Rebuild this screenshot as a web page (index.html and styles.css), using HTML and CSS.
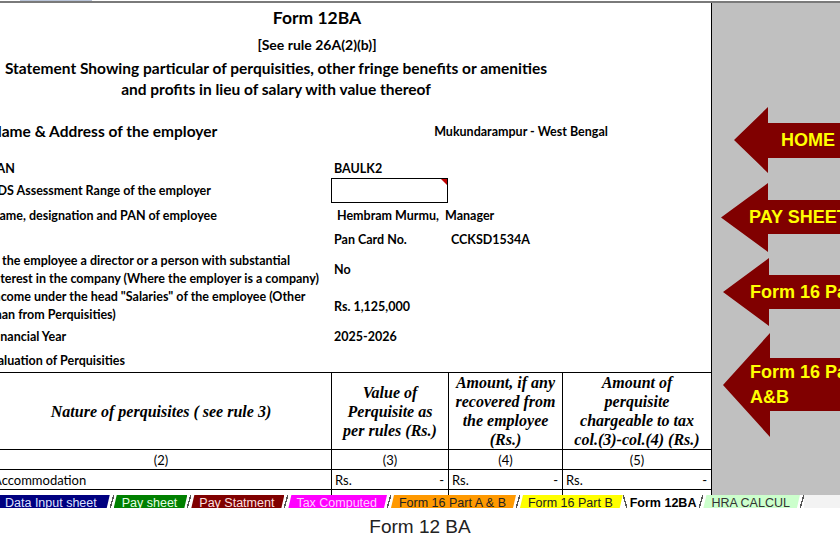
FILE: index.html
```html
<html>
<head>
  <link rel="stylesheet" href="styles.css">
</head>
<body>

<div class="topline"><span class="topline-tab"></span></div>

<div class="workspace">
  <div class="sheet">
    <div class="sheet-inner">

      <div class="row r-title"><div class="span3 shift">Form 12BA</div></div>
      <div class="row r-rule"><div class="span3 shift">[See rule 26A(2)(b)]</div></div>
      <div class="row r-statement">
        <div class="span3 center">Statement Showing particular of perquisities, other fringe benefits or amenities<br>and profits in lieu of salary with value thereof</div>
      </div>
      <div class="row r-gap1"></div>
      <div class="row r-employer">
        <div class="label big">Name &amp; Address of the employer</div>
        <div class="span-rest center val">Mukundarampur - West Bengal</div>
      </div>
      <div class="row r-gap2"></div>
      <div class="row r-pan">
        <div class="label">TAN</div>
        <div class="val pad">BAULK2</div>
      </div>
      <div class="row r-tds">
        <div class="label">TDS Assessment Range of the employer</div>
        <div class="input-box"><span class="comment-mark"></span></div>
      </div>
      <div class="row r-name">
        <div class="label">Name, designation and PAN of employee</div>
        <div class="span-rest val pad-wide">Hembram Murmu,  Manager</div>
      </div>
      <div class="row r-pancard">
        <div class="label"></div>
        <div class="val pad">Pan Card No.</div>
        <div class="val pad">CCKSD1534A</div>
      </div>
      <div class="row r-director">
        <div class="label two">Is the employee a director or a person with substantial<br>interest in the company (Where the employer is a company)</div>
        <div class="val pad">No</div>
      </div>
      <div class="row r-income">
        <div class="label two">Income under the head "Salaries" of the employee (Other<br>than from Perquisities)</div>
        <div class="val pad">Rs. 1,125,000</div>
      </div>
      <div class="row r-fy">
        <div class="label">Financial Year</div>
        <div class="val pad">2025-2026</div>
      </div>
      <div class="row r-valuation">
        <div class="label">Valuation of Perquisities</div>
      </div>

      <table class="perq">
        <colgroup>
          <col class="c-a"><col class="c-b"><col class="c-c"><col class="c-d">
        </colgroup>
        <tr class="perq-head">
          <th>Nature of perquisites ( see rule 3)</th>
          <th>Value of<br>Perquisite as<br>per rules (Rs.)</th>
          <th>Amount, if any<br>recovered from<br>the employee<br>(Rs.)</th>
          <th>Amount of<br>perquisite<br>chargeable to tax<br>col.(3)-col.(4) (Rs.)</th>
        </tr>
        <tr class="perq-num">
          <td>(2)</td><td>(3)</td><td>(4)</td><td>(5)</td>
        </tr>
        <tr class="perq-row">
          <td class="first">Accommodation</td>
          <td><div class="money"><span>Rs.</span><span>-</span></div></td>
          <td><div class="money"><span>Rs.</span><span>-</span></div></td>
          <td><div class="money"><span>Rs.</span><span>-</span></div></td>
        </tr>
        <tr class="perq-row">
          <td></td><td></td><td></td><td></td>
        </tr>
      </table>

    </div>
  </div>

  <div class="panel">
    <div class="arrow arrow-home"><span>HOME</span></div>
    <div class="arrow arrow-pay"><span>PAY SHEET</span></div>
    <div class="arrow arrow-f16"><span>Form 16 Part B</span></div>
    <div class="arrow arrow-f16ab"><span>Form 16 Part<br>A&amp;B</span></div>
  </div>
</div>

<div class="tabs">
  <div class="tab t-blue first-tab">Data Input sheet</div>
  <div class="tab-sep"></div>
  <div class="tab t-green">Pay sheet</div>
  <div class="tab-sep"></div>
  <div class="tab t-red">Pay Statment</div>
  <div class="tab-sep"></div>
  <div class="tab t-pink">Tax Computed</div>
  <div class="tab-sep"></div>
  <div class="tab t-orange">Form 16 Part A &amp; B</div>
  <div class="tab-sep"></div>
  <div class="tab t-yellow">Form 16 Part B</div>
  <div class="tab-sep back"></div>
  <div class="tab t-active">Form 12BA</div>
  <div class="tab-sep"></div>
  <div class="tab t-mint">HRA CALCUL</div>
  <div class="tab-sep"></div>
  <div class="tab-rest"></div>
</div>

<div class="caption">Form 12 BA</div>

</body>
</html>
```

FILE: styles.css
```css
body {
  margin: 0;
  width: 840px;
  background-color: #fff;
  color: #000;
  font-family: Lato, "Liberation Sans", sans-serif;
  overflow: hidden;
}

.topline {
  height: 1px;
  border-bottom: 2px solid #7a7a7a;
}
.topline-tab {
  display: block;
  margin-left: 20px;
  width: 72px;
  height: 1px;
  background-color: #b9c4d8;
}

.workspace {
  display: flex;
  height: 492px;
}

.sheet {
  width: 711px;
  border-right: 1px solid #000;
  overflow: hidden;
}
.sheet-inner {
  margin-left: -10px;
  width: 721px;
  font-weight: bold;
}

.row {
  display: grid;
  grid-template-columns: 341px 117px 114px 149px;
  align-items: center;
  font-size: 12.5px;
}
.span3 { grid-column: 1 / 4; }
.span-rest { grid-column: 2 / 5; }
.center { text-align: center; }
.shift { text-align: center; padding-left: 82px; }

.r-title { height: 28px; font-size: 17.5px; }
.r-rule { height: 26px; font-size: 14px; }
.r-statement { height: 44px; font-size: 15.5px; line-height: 21px; }
.r-gap1 { height: 17px; }
.r-employer { height: 26px; }
.r-gap2 { height: 14px; }
.r-pan { height: 20px; }
.r-tds { height: 25px; }
.r-name { height: 24px; }
.r-pancard { height: 24px; }
.r-director { height: 37px; }
.r-income { height: 36px; }
.r-fy { height: 24px; }
.r-valuation { height: 24px; }

.label {
  white-space: nowrap;
}
.label.big {
  font-size: 15.5px;
}
.label.two {
  line-height: 18px;
}
.val {
  white-space: pre;
}
.pad { padding-left: 3px; }
.pad-wide { padding-left: 6px; }

.input-box {
  height: 23px;
  border: 1px solid #000;
  position: relative;
}
.comment-mark {
  position: absolute;
  top: 0;
  right: 0;
  width: 0;
  height: 0;
  border-top: 6px solid #c00000;
  border-left: 6px solid transparent;
}

.perq {
  border-collapse: collapse;
  table-layout: fixed;
  width: 721px;
  font-size: 13px;
}
.c-a { width: 341px; }
.c-b { width: 117px; }
.c-c { width: 114px; }
.c-d { width: 149px; }
.perq th,
.perq td {
  border: 1px solid #000;
  padding: 0;
}
.perq-head th {
  height: 76px;
  font-family: "Liberation Serif", serif;
  font-style: italic;
  font-size: 16px;
  line-height: 19px;
  text-align: center;
  vertical-align: middle;
}
.perq-num td {
  height: 20px;
  text-align: center;
}
.perq-row td {
  height: 20px;
}
.perq-row .first {
  padding-left: 2px;
}
.money {
  display: flex;
  justify-content: space-between;
  padding: 0 4px 0 3px;
}

.panel {
  flex: 1;
  background-color: #c0c0c0;
  position: relative;
  overflow: hidden;
}
.arrow {
  position: absolute;
  right: -20px;
  display: flex;
  align-items: center;
  background-color: #800000;
  color: #ffff00;
  font-family: "Liberation Sans", Arial, sans-serif;
  font-weight: bold;
  font-size: 18px;
  line-height: 25px;
  white-space: nowrap;
  clip-path: polygon(0 50%, var(--base) 0, var(--base) var(--s1), 100% var(--s1), 100% var(--s2), var(--base) var(--s2), var(--base) 100%);
}
.arrow-home {
  left: 22px; top: 104px; height: 66px;
  --base: 34px; --s1: 16px; --s2: 51px;
}
.arrow-home span { margin-left: 47px; }
.arrow-pay {
  left: 9px; top: 180px; height: 69px;
  --base: 47px; --s1: 17px; --s2: 51px;
}
.arrow-pay span { margin-left: 28px; }
.arrow-f16 {
  left: 11px; top: 255px; height: 68px;
  --base: 46px; --s1: 17px; --s2: 51px;
}
.arrow-f16 span { margin-left: 27px; }
.arrow-f16ab {
  left: 11px; top: 330px; height: 104px;
  --base: 47px; --s1: 25px; --s2: 78px;
}
.arrow-f16ab span { margin-left: 27px; }

.tabs {
  display: flex;
  height: 13px;
  overflow: hidden;
  font-family: "Liberation Sans", Arial, sans-serif;
  font-size: 12.5px;
  line-height: 16px;
  background-color: #fff;
}
.tab {
  padding: 0 10px 0 8px;
  white-space: nowrap;
  clip-path: polygon(3px 0, 100% 0, calc(100% - 3px) 100%, 0 100%);
}
.tab.first-tab {
  padding: 0 13px 0 5px;
  clip-path: polygon(0 0, 100% 0, calc(100% - 3px) 100%, 0 100%);
}
.tab-sep {
  width: 4px;
  background: linear-gradient(to bottom right, transparent 40%, #555 40%, #555 60%, transparent 60%);
}
.tab-sep.back {
  background: linear-gradient(to top right, transparent 40%, #555 40%, #555 60%, transparent 60%);
}
.t-blue { background-color: #000080; color: #dfe3ff; }
.t-green { background-color: #008000; color: #e6ffe6; }
.t-red { background-color: #800000; color: #ffe0e0; }
.t-pink { background-color: #ff00ff; color: #ffd0ff; }
.t-orange { background-color: #ff9900; color: #222; }
.t-yellow { background-color: #ffff00; color: #222; }
.t-active { background-color: #fff; color: #000; font-weight: bold; clip-path: none; padding: 0 3px; }
.t-mint { background-color: #ccffcc; color: #333; }
.tab-rest { flex: 1; background-color: #f3f3f3; }

.caption {
  height: 41px;
  line-height: 38px;
  text-align: center;
  font-family: "Liberation Sans", Arial, sans-serif;
  font-size: 19px;
  color: #222;
}
```
